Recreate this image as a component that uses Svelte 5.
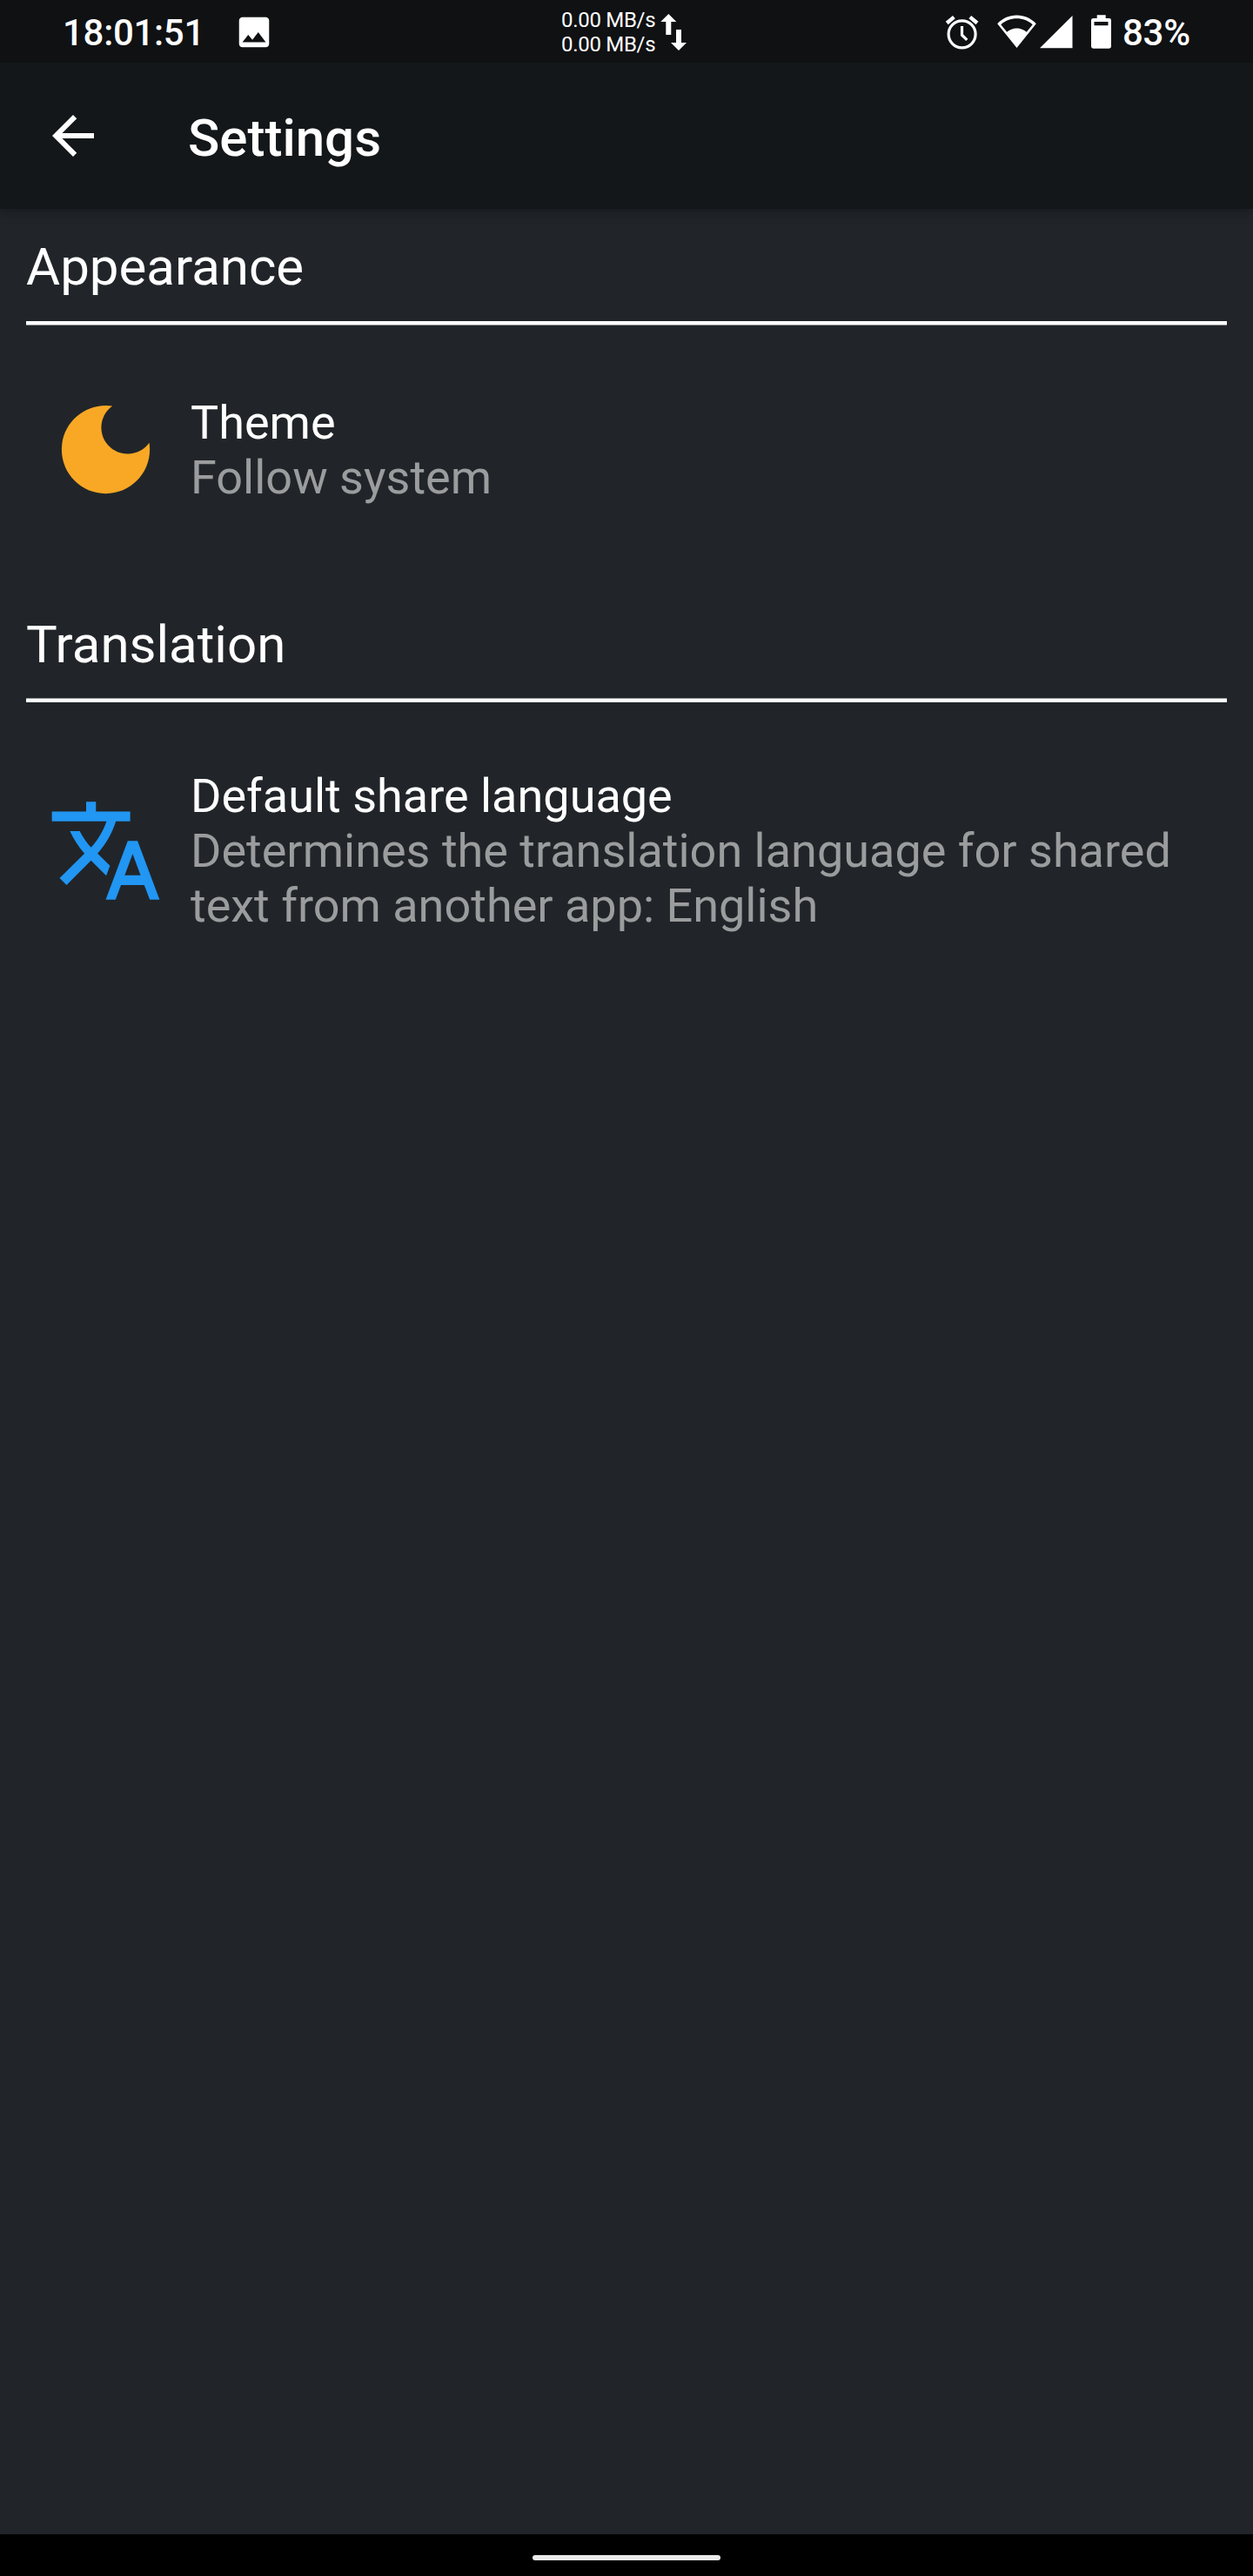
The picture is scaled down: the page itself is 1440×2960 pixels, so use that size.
<script>
  const sections = [
    {
      title: 'Appearance',
      kind: 'appearance',
      label: 'Theme',
      detail: 'Follow system',
      color: '#f9a825',
      path: 'M12 3c-4.97 0-9 4.03-9 9s4.03 9 9 9 9-4.03 9-9c0-.46-.04-.92-.1-1.36-.98 1.37-2.58 2.26-4.4 2.26-2.98 0-5.4-2.42-5.4-5.4 0-1.81.89-3.42 2.26-4.4-.44-.06-.9-.1-1.36-.1z'
    },
    {
      title: 'Translation',
      kind: 'translation',
      label: 'Default share language',
      detail: 'Determines the translation language for shared text from another app: English',
      color: '#2196f3',
      path: 'M12.87 15.07l-2.54-2.51.03-.03c1.74-1.94 2.98-4.17 3.71-6.53H17V4h-7V2H8v2H1v1.99h11.17C11.5 7.92 10.44 9.75 9 11.35 8.07 10.32 7.3 9.19 6.69 8h-2c.73 1.63 1.73 3.17 2.98 4.56l-5.09 5.02L4 19l5-5 3.11 3.11.76-2.04zM18.5 10h-2L12 22h2l1.12-3h4.75L21 22h2l-4.5-12zm-2.62 7l1.62-4.33L19.12 17h-3.24z'
    }
  ];
</script>

<div class="screen">
  <div class="status">
    <div class="left">
      <span class="clock">18:01:51</span>
      <svg class="photo" viewBox="0 0 24 24"><path d="M21 19V5c0-1.1-.9-2-2-2H5c-1.1 0-2 .9-2 2v14c0 1.1.9 2 2 2h14c1.1 0 2-.9 2-2zM8.5 13.5l2.5 3.01L14.5 12l4.5 6H5l3.5-4.5z" /></svg>
    </div>
    <div class="net">
      <div class="rates"><span>0.00 MB/s</span><span>0.00 MB/s</span></div>
      <svg class="updown" viewBox="759 0 31 72"><path d="M768.3 15l9 9h-6v15h-6V24h-6zM777 33h6v15h6l-9 9-9-9h6z" /></svg>
    </div>
    <div class="right">
      <svg class="alarm" viewBox="1083 0 45 72">
        <circle cx="1105.6" cy="38.3" r="15.5" />
        <path d="M1105.5 29v10.200l5.800 5.600" />
        <path class="bells" d="M1088.200 25.500l8.200-6.900M1114.800 18.600l8.200 6.900" />
      </svg>
      <svg class="wifi" viewBox="1146 0 45 72"><path fill-rule="evenodd" d="M1168.5 54l22.3-27.7c-5.6-6.2-13.5-9.8-22.3-9.8s-16.7 3.6-22.3 9.800zM1150.300 27.200c5-4.300 11.400-6.900 18.200-6.900s13.200 2.600 18.200 6.900l-6.900 8.600c-3.100-2.600-7-4.200-11.300-4.200s-8.200 1.600-11.300 4.200z" /></svg>
      <svg class="signal" viewBox="1195 0 38 72"><path d="M1195 54.300h37.500V17z" /></svg>
      <svg class="battery" viewBox="1254 0 23 72"><path fill-rule="evenodd" d="M1260.700 16.300h10V20h4q2.300 0 2.300 2.300v30q0 2.400-2.300 2.400h-18.400q-2.300 0-2.300-2.400v-30q0-2.300 2.300-2.300h4.400zM1257.500 24v4.300h16V24z" /></svg>
      <span class="percent">83%</span>
    </div>
  </div>

  <header>
    <svg class="back" viewBox="0 0 24 24"><path d="M20 11H7.83l5.59-5.59L12 4l-8 8 8 8 1.41-1.41L7.83 13H20v-2z" /></svg>
    <h1>Settings</h1>
  </header>

  <main>
    {#each sections as s}
      <section class={s.kind}>
        <h2>{s.title}</h2>
        <div class="row">
          <svg class="icon" viewBox="0 0 24 24" fill={s.color}><path d={s.path} /></svg>
          <div class="text">
            <div>{s.label}</div>
            <div class="detail">{s.detail}</div>
          </div>
        </div>
      </section>
    {/each}
  </main>

  <nav><div class="pill"></div></nav>
</div>

<style>
  :global(body) { margin: 0; background: #212529; }
  .screen {
    width: 1440px;
    height: 2960px;
    display: flex;
    flex-direction: column;
    overflow: hidden;
    background: #212529;
    color: #fff;
    font-family: Roboto, sans-serif;
  }
  svg { display: block; flex: none; }
  .status {
    height: 72px;
    flex: none;
    display: grid;
    grid-template-columns: 645px 1fr 357px;
    background: #0f1113;
    position: relative;
    z-index: 2;
  }
  .status svg { fill: #fff; }
  .left, .net, .right { display: flex; align-items: center; white-space: nowrap; }
  .left { padding-left: 72px; }
  .clock, .percent { font-size: 42px; line-height: 72px; font-weight: 500; padding-top: 2px; letter-spacing: -0.3px; }
  .clock { width: 197px; }
  .photo { width: 46px; height: 46px; }
  .rates { width: 114px; display: flex; flex-direction: column; font-size: 24px; line-height: 28px; letter-spacing: -0.3px; }
  .updown { width: 31px; height: 72px; }
  .status .alarm { width: 45px; height: 72px; margin-right: 18px; fill: none; stroke: #fff; stroke-width: 3.2; }
  .bells { stroke-width: 4.4; }
  .wifi { width: 45px; height: 72px; margin-right: 4px; }
  .signal { width: 38px; height: 72px; margin-right: 21px; }
  .battery { width: 23px; height: 72px; margin-right: 13px; }
  header {
    height: 168px;
    flex: none;
    display: flex;
    align-items: center;
    padding-left: 48px;
    background: #131719;
    box-shadow: 0 4px 12px rgba(0, 0, 0, 0.3);
    position: relative;
    z-index: 1;
  }
  .back { width: 72px; height: 72px; fill: #fff; }
  h1 { margin: 5px 0 0 96px; font-size: 60px; line-height: 71px; font-weight: 500; }
  main { flex: 1; padding: 0 30px; }
  section { height: 434px; }
  h2 {
    margin: 0;
    padding-top: 31px;
    height: 98px;
    border-bottom: 4px solid #fff;
    box-shadow: 0 1px 0 #8f9294;
    font-size: 60px;
    line-height: 71px;
    font-weight: 400;
  }
  .translation h2 { box-shadow: inset 0 -1px 0 #8f9294; }
  .row { display: flex; align-items: center; padding: 76px 0 0 24px; }
  .icon { width: 135px; height: 135px; }
  .text { margin-left: 30px; padding-top: 1px; width: 1160px; font-size: 54px; line-height: 63px; }
  .translation .row { padding-top: 75px; }
  .detail { color: #9b9c9d; }
  nav { height: 48px; flex: none; background: #000; padding-top: 24px; box-sizing: border-box; }
  .pill { width: 216px; height: 6px; margin: 0 auto; border-radius: 3px; background: #ebebeb; }
</style>
